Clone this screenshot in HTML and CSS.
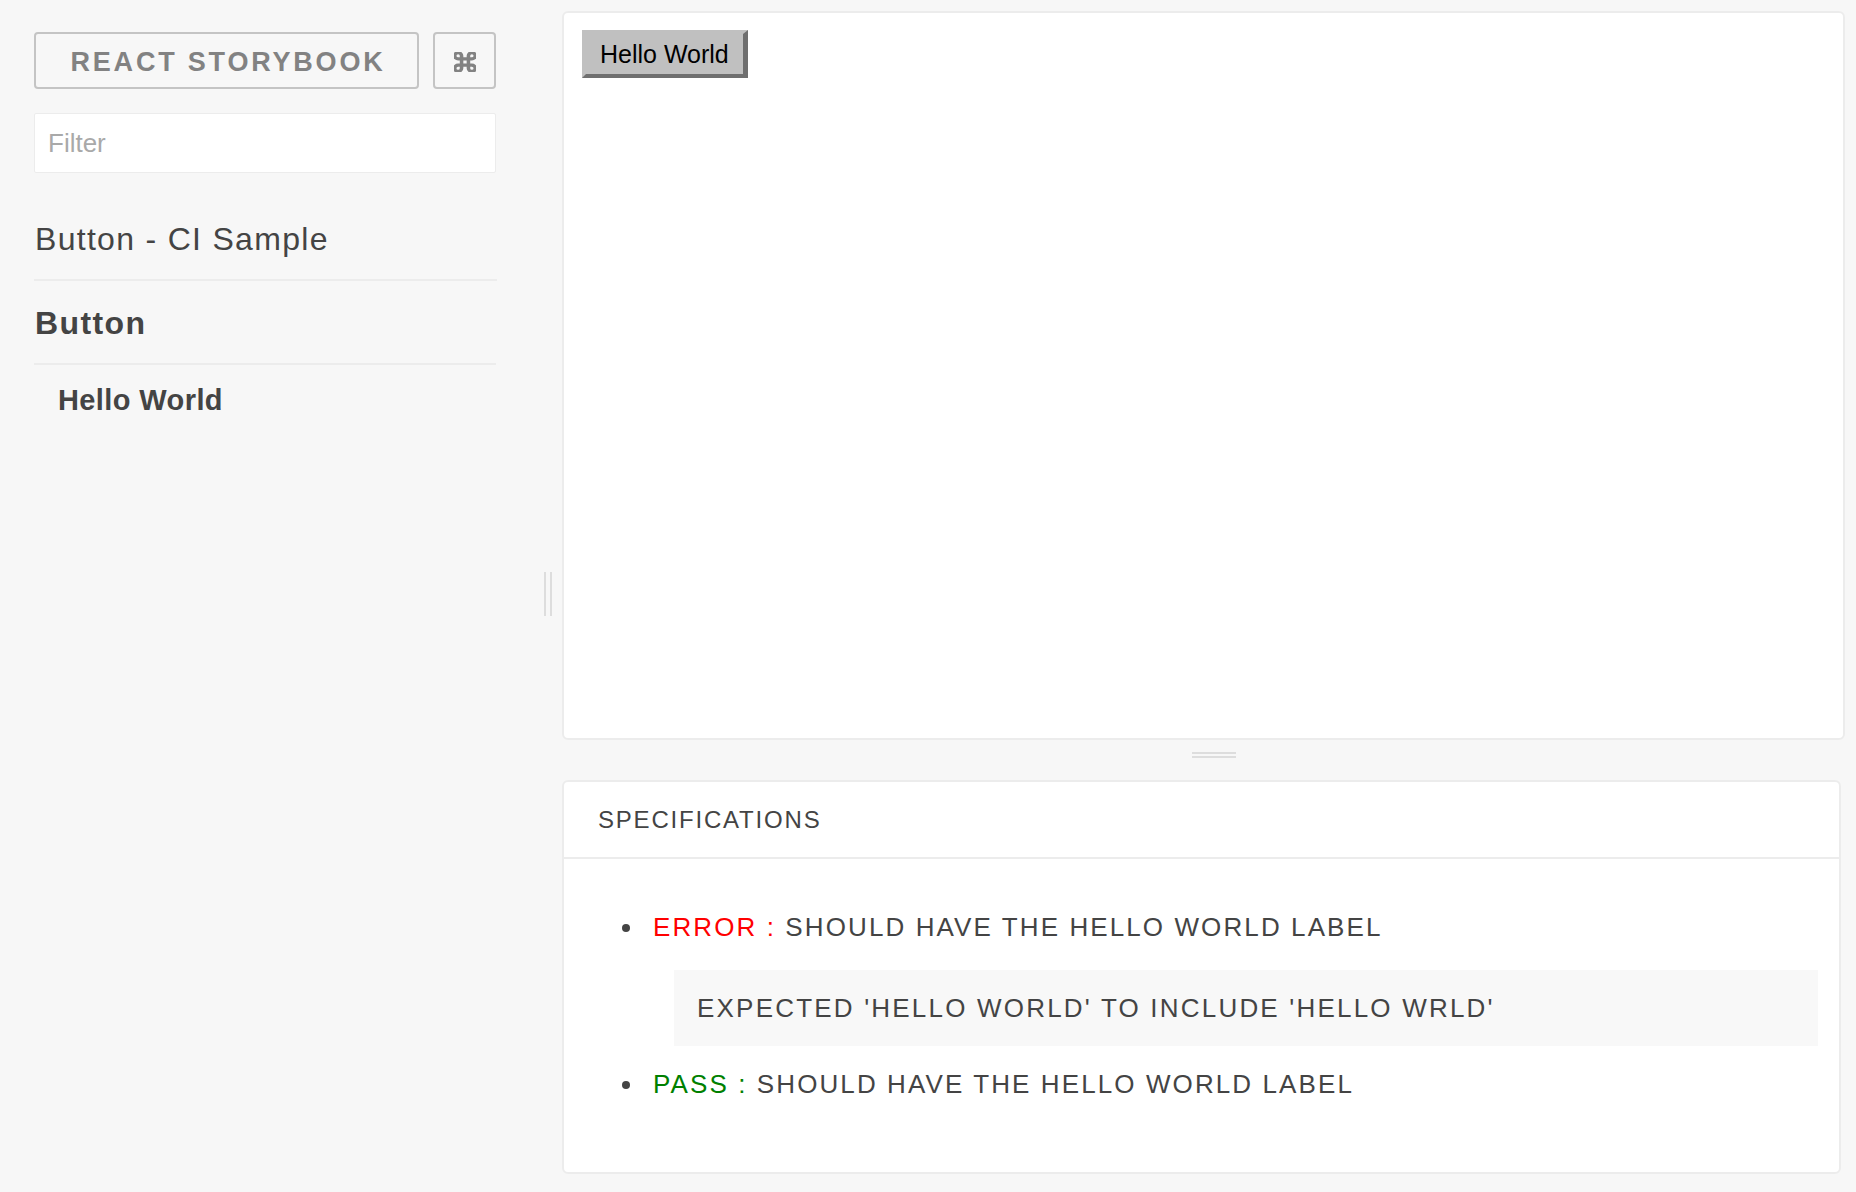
FILE: index.html
```html
<!DOCTYPE html>
<html lang="en">
<head>
<meta charset="utf-8">
<title>React Storybook</title>
<link rel="stylesheet" href="styles.css">
</head>
<body>
<div class="app">
  <aside class="sidebar">
    <div class="header">
      <a class="brand">REACT STORYBOOK</a>
      <button class="shortcut" aria-label="Keyboard shortcuts">
        <svg class="cmd-icon" width="22" height="20" viewBox="2.4 2.4 19.2 19.2" preserveAspectRatio="none" fill="none" stroke="#828282" stroke-width="3.1" stroke-linecap="round" stroke-linejoin="round"><path d="M15 6v12a3 3 0 1 0 3-3H6a3 3 0 1 0 3 3V6a3 3 0 1 0-3 3h12a3 3 0 1 0-3-3"/></svg>
      </button>
    </div>
    <input class="filter" type="text" placeholder="Filter">
    <div class="kind-title">Button - CI Sample</div>
    <div class="kind">
      <div class="kind-name">Button</div>
      <ul class="stories">
        <li class="story selected">Hello World</li>
      </ul>
    </div>
  </aside>
  <div class="vresizer"><span class="grip-v"></span></div>
  <main class="main">
    <section class="preview">
      <button class="demo-btn">Hello World</button>
    </section>
    <div class="hresizer"><span class="grip-h"></span></div>
    <section class="specs">
      <header class="specs-head">SPECIFICATIONS</header>
      <ul class="spec-list">
        <li class="spec">
          <div class="spec-line"><span class="bullet"></span><span class="status error">ERROR :</span>&nbsp;SHOULD HAVE THE HELLO WORLD LABEL</div>
          <div class="spec-msg">EXPECTED 'HELLO WORLD' TO INCLUDE 'HELLO WRLD'</div>
        </li>
        <li class="spec">
          <div class="spec-line"><span class="bullet"></span><span class="status pass">PASS :</span>&nbsp;SHOULD HAVE THE HELLO WORLD LABEL</div>
        </li>
      </ul>
    </section>
  </main>
</div>
</body>
</html>
```

FILE: styles.css
```css
html, body {
  margin: 0;
  padding: 0;
  height: 100%;
}

body {
  background: #f7f7f7;
  font-family: "Liberation Sans", Arial, sans-serif;
  color: #444444;
}

.app {
  display: flex;
  height: 100vh;
}

/* Sidebar */
.sidebar {
  width: 496px;
  flex: 0 0 496px;
  box-sizing: border-box;
  padding: 32px 0 0 34px;
}

.header {
  display: flex;
  gap: 14px;
  height: 57px;
}

.brand {
  flex: 1;
  box-sizing: border-box;
  height: 57px;
  border: 2px solid #c4c4c4;
  border-radius: 4px;
  padding: 4px 0 0 3px;
  line-height: 49px;
  text-align: center;
  font-size: 27px;
  font-weight: bold;
  letter-spacing: 2.8px;
  color: #828282;
}

.shortcut {
  width: 63px;
  height: 57px;
  box-sizing: border-box;
  border: 2px solid #c4c4c4;
  border-radius: 4px;
  background: transparent;
  padding: 2px 0 0 0;
  display: flex;
  align-items: center;
  justify-content: center;
}

.cmd-icon {
  display: block;
}

.filter {
  display: block;
  width: 462px;
  height: 60px;
  box-sizing: border-box;
  margin-top: 24px;
  border: 1px solid #ececec;
  border-radius: 2px;
  background: #ffffff;
  padding: 0 0 0 13px;
  font-family: "Liberation Sans", Arial, sans-serif;
  font-size: 26px;
  color: #444444;
  outline: none;
}

.filter::placeholder {
  color: #a9a9a9;
}

.kind-title {
  width: 462px;
  padding: 46px 0 20px 1px;
  line-height: 40px;
  font-size: 32px;
  letter-spacing: 1.3px;
  color: #444444;
  border-bottom: 2px solid #ececec;
}

.kind {
  width: 462px;
}

.kind-name {
  padding: 22px 0 20px 1px;
  line-height: 40px;
  font-size: 32px;
  font-weight: bold;
  letter-spacing: 1.4px;
  color: #444444;
  border-bottom: 2px solid #ececec;
}

.stories {
  list-style: none;
  margin: 0;
  padding: 15px 0 0 24px;
}

.story {
  line-height: 40px;
  font-size: 29px;
  font-weight: bold;
  letter-spacing: 0.4px;
  color: #444444;
}

/* Vertical resizer */
.vresizer {
  flex: 0 0 66px;
  display: flex;
  align-items: center;
  justify-content: flex-end;
  padding: 0 10px 4px 0;
  box-sizing: border-box;
}

.grip-v {
  display: block;
  width: 8px;
  height: 44px;
  box-sizing: border-box;
  border-left: 2px solid #dddddd;
  border-right: 2px solid #dddddd;
}

/* Main */
.main {
  flex: 1;
  display: flex;
  flex-direction: column;
  box-sizing: border-box;
  padding: 11px 11px 18px 0;
  min-width: 0;
}

.preview {
  height: 729px;
  flex: 0 0 729px;
  box-sizing: border-box;
  border: 2px solid #ececec;
  border-radius: 6px;
  background: #ffffff;
  padding: 17px 18px;
}

.demo-btn {
  display: block;
  height: 48px;
  box-sizing: border-box;
  border-style: solid;
  border-width: 4px 5px 4px 4px;
  border-color: #c0c0c0 #6f6f6f #6f6f6f #c0c0c0;
  background: #c0c0c0;
  padding: 0 14px;
  margin: 0;
  line-height: 40px;
  font-family: "Liberation Sans", Arial, sans-serif;
  font-size: 25px;
  color: #000000;
}

.hresizer {
  flex: 0 0 40px;
  height: 40px;
  box-sizing: border-box;
  padding: 12px 0 0 21px;
  display: flex;
  justify-content: center;
  align-items: flex-start;
}

.grip-h {
  display: block;
  width: 44px;
  height: 6px;
  box-sizing: border-box;
  border-top: 2px solid #dddddd;
  border-bottom: 2px solid #dddddd;
}

.specs {
  flex: 1;
  margin-right: 4px;
  box-sizing: border-box;
  border: 2px solid #ececec;
  border-radius: 6px;
  background: #ffffff;
}

.specs-head {
  height: 75px;
  line-height: 75px;
  padding-left: 34px;
  font-size: 24px;
  letter-spacing: 1.8px;
  color: #444444;
  border-bottom: 2px solid #ececec;
}

.spec-list {
  list-style: none;
  margin: 0;
  padding: 48px 21px 0 58px;
}

.spec-line {
  display: flex;
  align-items: center;
  height: 40px;
  font-size: 26px;
  letter-spacing: 2.1px;
  color: #444444;
  white-space: pre;
}

.bullet {
  display: block;
  flex: 0 0 8px;
  width: 8px;
  height: 8px;
  border-radius: 50%;
  background: #444444;
  margin: 2px 23px 0 0;
}

.status.error {
  color: #ff0000;
}

.status.pass {
  color: #008000;
}

.spec-msg {
  margin: 23px 0 18px 52px;
  height: 76px;
  line-height: 76px;
  padding-left: 23px;
  background: #f8f8f8;
  font-size: 26px;
  letter-spacing: 2.2px;
  color: #444444;
  white-space: nowrap;
}
```
